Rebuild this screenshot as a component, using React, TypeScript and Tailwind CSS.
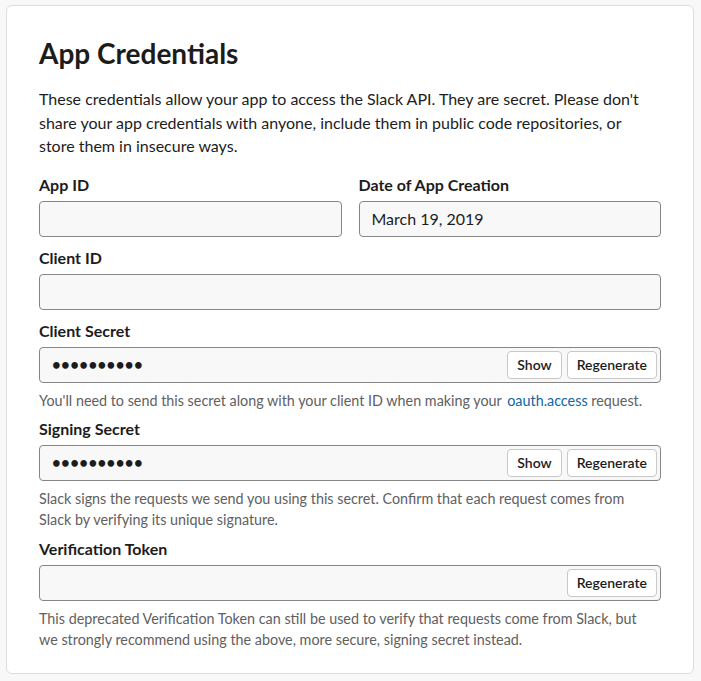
import React from "react";

const font = { fontFamily: "Lato, 'Noto Sans', sans-serif" };

function Label({ children }: { children: React.ReactNode }) {
  return (
    <div className="mb-[5px] text-[16px] font-bold leading-[22px] text-[#1d1c1d]">
      {children}
    </div>
  );
}

function Button({ children }: { children: React.ReactNode }) {
  return (
    <button className="h-7 rounded-[4px] border border-[#c8c8c8] bg-white px-[9px] text-[14px] font-semibold leading-none text-[#1d1c1d]">
      {children}
    </button>
  );
}

function Field({
  value,
  secret,
  buttons = [],
}: {
  value?: string;
  secret?: boolean;
  buttons?: string[];
}) {
  return (
    <div className="flex h-9 items-center rounded-[4px] border border-[#868686] bg-[#f8f8f8] pl-[12px] pr-[3px]">
      <div
        className={
          secret
            ? "flex-1 text-[15px] font-bold tracking-[0.4px] text-[#1d1c1d]"
            : "flex-1 text-[16px] text-[#1d1c1d]"
        }
      >
        {value}
      </div>
      <div className="flex gap-[5px]">
        {buttons.map((b) => (
          <Button key={b}>{b}</Button>
        ))}
      </div>
    </div>
  );
}

function Help({ children }: { children: React.ReactNode }) {
  return (
    <p className="mt-[7px] pr-[8px] text-[14.35px] leading-[21px] text-[#616061]">
      {children}
    </p>
  );
}

export default function App() {
  const dots = "••••••••••";
  return (
    <div className="min-h-[681px] bg-[#f8f8f8] pl-[6px] pr-[7px] pt-[5px]" style={font}>
      <div className="rounded-[6px] border border-[#dddddd] bg-white px-[32px] pb-[23px] pt-[30px]">
        <h1 className="text-[28px] font-bold leading-[34px] text-[#1d1c1d]">
          App Credentials
        </h1>
        <p className="mt-[17px] pr-[8px] text-[16px] leading-[23.5px] text-[#1d1c1d]">
          These credentials allow your app to access the Slack API. They are
          secret. Please don't share your app credentials with anyone, include
          them in public code repositories, or store them in insecure ways.
        </p>

        <div className="mt-[16px] grid grid-cols-2 gap-x-[17px]">
          <div>
            <Label>App ID</Label>
            <Field />
          </div>
          <div>
            <Label>Date of App Creation</Label>
            <Field value="March 19, 2019" />
          </div>
        </div>

        <div className="mt-[10px]">
          <Label>Client ID</Label>
          <Field />
        </div>

        <div className="mt-[10px]">
          <Label>Client Secret</Label>
          <Field value={dots} secret buttons={["Show", "Regenerate"]} />
          <Help>
            You'll need to send this secret along with your client ID when
            making your{" "}
            <a className="ml-[2px] text-[#1264a3]" href="#">
              oauth.access
            </a>{" "}
            request.
          </Help>
        </div>

        <div className="mt-[7px]">
          <Label>Signing Secret</Label>
          <Field value={dots} secret buttons={["Show", "Regenerate"]} />
          <Help>
            Slack signs the requests we send you using this secret. Confirm that
            each request comes from Slack by verifying its unique signature.
          </Help>
        </div>

        <div className="mt-[8px]">
          <Label>Verification Token</Label>
          <Field buttons={["Regenerate"]} />
          <Help>
            This deprecated Verification Token can still be used to verify that
            requests come from Slack, but we strongly recommend using the above,
            more secure, signing secret instead.
          </Help>
        </div>
      </div>
    </div>
  );
}
